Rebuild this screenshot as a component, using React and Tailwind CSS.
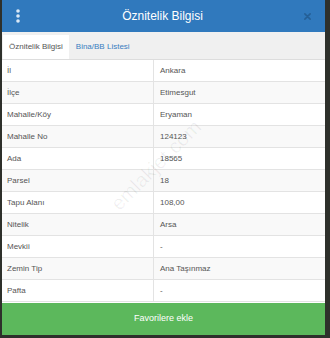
const rows = [
  ['İl', 'Ankara'],
  ['İlçe', 'Etimesgut'],
  ['Mahalle/Köy', 'Eryaman'],
  ['Mahalle No', '124123'],
  ['Ada', '18565'],
  ['Parsel', '18'],
  ['Tapu Alanı', '108,00'],
  ['Nitelik', 'Arsa'],
  ['Mevkii', '-'],
  ['Zemin Tip', 'Ana Taşınmaz'],
  ['Pafta', '-'],
]

const App = () => {
  return (
    <div className="w-[330px] h-[338px] bg-[#2e302b] pl-[2px] pr-[5px] pb-[3px] font-['Liberation_Sans',Arial,sans-serif]">
      <div className="relative flex h-full flex-col overflow-hidden bg-white">
        {/* header */}
        <div className="flex h-[32px] items-center bg-[#3079bd] px-3">
          <svg width="6" height="16" viewBox="0 0 6 16" className="ml-[1px]">
            <circle cx="3" cy="3" r="1.8" fill="#dbe9f6" />
            <circle cx="3" cy="8" r="1.8" fill="#dbe9f6" />
            <circle cx="3" cy="13" r="1.8" fill="#dbe9f6" />
          </svg>
          <div className="flex-1 text-center text-[12px] text-white">Öznitelik Bilgisi</div>
          <svg width="7" height="7" viewBox="0 0 8 8" className="mr-[2px]">
            <path d="M1 1L7 7M7 1L1 7" stroke="#1d4f7e" strokeWidth="1.8" strokeLinecap="round" opacity="0.6" />
          </svg>
        </div>

        {/* tabs */}
        <div className="flex h-[28px] items-end border-b border-[#dddddd] bg-[#f0f0f0] pl-[1px]">
          <div className="flex h-[24px] items-center bg-white px-[6px] text-[8px] text-[#555]">Öznitelik Bilgisi</div>
          <div className="flex h-[24px] items-center px-[7px] text-[8px] text-[#3a7ec0]">Bina/BB Listesi</div>
        </div>

        {/* table */}
        <div className="flex flex-col">
          {rows.map(([label, value], i) => (
            <div
              key={label}
              className={`flex h-[22px] border-b border-[#e3e3e3] text-[8px] text-[#555555] ${i % 2 === 1 ? 'bg-[#f9f9f9]' : 'bg-white'}`}
            >
              <div className="flex w-[152px] items-center border-r border-[#e3e3e3] pl-[5px]">{label}</div>
              <div className="flex flex-1 items-center pl-[6px]">{value}</div>
            </div>
          ))}
        </div>

        <button className="mt-auto flex h-[32px] w-full items-center justify-center bg-[#5cb85c] text-[9px] text-white">
          Favorilere ekle
        </button>

        {/* watermark */}
        <div className="pointer-events-none absolute left-[95px] top-[150px] rotate-[-45deg] text-[20px] text-black/[0.06]">
          emlakjet.com
        </div>
      </div>
    </div>
  )
}

export default App
